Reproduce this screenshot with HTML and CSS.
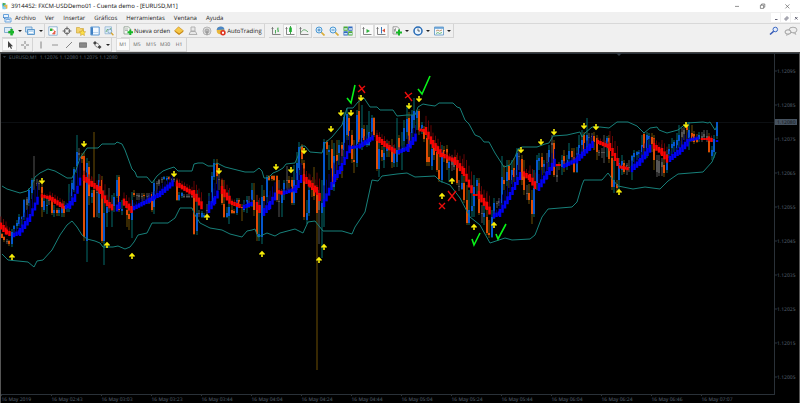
FILE: index.html
```html
<!DOCTYPE html>
<html lang="es">
<head>
<meta charset="UTF-8">
<meta name="viewport" content="width=device-width, initial-scale=1.0">
<title>3914452: FXCM-USDDemo01 - Cuenta demo - [EURUSD,M1]</title>
<link rel="stylesheet" href="styles.css">
</head>

<body>
    <header class="titlebar">
        <svg class="icon" viewBox="0 0 10 10"><path d="M1 2h5l1 6-5 1z" fill="#6fc3e8"/><path d="M2 1l4 1-3 3z" fill="#4cae50"/><path d="M4 4l4-1v5l-4 1z" fill="#e8b64a"/><path d="M3 6h3v3H3z" fill="#8ed2f2"/></svg>
        <h1>3914452: FXCM-USDDemo01 - Cuenta demo - [EURUSD,M1]</h1>
        <div class="window-buttons">
            <button aria-label="Minimizar"><svg class="icon" viewBox="0 0 10 10"><path d="M2.500 5.500h5" stroke="#777" fill="none"/></svg></button>
            <button aria-label="Restaurar"><svg class="icon" viewBox="0 0 10 10"><path d="M3 4h4v4H3zM4.500 4V2.500h4V6.500H7" stroke="#555" stroke-width=".8" fill="none"/></svg></button>
            <button aria-label="Cerrar"><svg class="icon" viewBox="0 0 10 10"><path d="M3 3l5 5M8 3L3 8" stroke="#555" stroke-width=".8"/></svg></button>
        </div>
    </header>

    <nav class="menubar">
        <svg class="icon" viewBox="0 0 10 10"><path d="M1.500 1.500h5v3h-5zM3 5h6v4H3z" fill="#eaf4ff" stroke="#5b9bd8" stroke-width=".9"/><path d="M1 4l2 2M4 7l2-1 2 1" stroke="#3a78c0" stroke-width=".8" fill="none"/></svg>
        <a href="#">Archivo</a>
        <a href="#">Ver</a>
        <a href="#">Insertar</a>
        <a href="#">Gráficos</a>
        <a href="#">Herramientas</a>
        <a href="#">Ventana</a>
        <a href="#">Ayuda</a>
        <div class="child-buttons">
            <button aria-label="Minimizar gráfico"><svg viewBox="0 0 8 8"><path d="M3 5.500h2.500" stroke="#667"/></svg></button>
            <button aria-label="Restaurar gráfico"><svg viewBox="0 0 8 8"><path d="M3 4h2v2H3zM4 3h2v2" fill="none" stroke="#667" stroke-width=".7"/></svg></button>
            <button aria-label="Cerrar gráfico"><svg viewBox="0 0 8 8"><path d="M3 3l2.500 2.500M5.500 3L3 5.500" stroke="#667"/></svg></button>
        </div>
    </nav>

    <div class="toolbar">
        <div class="group">
            <button aria-label="Nuevo gráfico"><svg class="icon" viewBox="0 0 10 10"><path d="M.5 1.500h7v5h-7z" fill="#dcecf8" stroke="#6b9cc4" stroke-width=".8"/><path d="M4.500 5h2V3h2.200v2h1.800v2.200H8.700v2H6.500v-2h-2z" fill="#18b828" stroke="#0c8a1a" stroke-width=".3"/></svg></button>
            <button class="caret" aria-label="Más gráficos"></button>
            <button aria-label="Perfiles"><svg class="icon" viewBox="0 0 10 10"><path d="M.5 1h6.500v5H.5z" fill="#cfe3f5" stroke="#5b95c8" stroke-width=".8"/><path d="M2.500 3.500h7v5h-7z" fill="#bcd9f2" stroke="#4f8ec6" stroke-width=".9"/><path d="M4 6.500h4" stroke="#fff"/></svg></button>
            <button class="caret" aria-label="Más perfiles"></button>
        </div>
        <div class="group bar-end">
            <button aria-label="Observación de mercado"><svg class="icon" viewBox="0 0 10 10"><path d="M.8.8h8.400v8.400H.8z" fill="#fff" stroke="#7aa6cc" stroke-width=".8"/><path d="M2 2.500h2.500V5H2z" fill="#28b030"/><path d="M4.500 3l3 3M7 5v3H4.500z" stroke="#e0523a" stroke-width=".7" fill="#f0705a"/></svg></button>
            <button aria-label="Ventana de datos"><svg class="icon" viewBox="0 0 10 10"><circle cx="5" cy="5" r="2.800" fill="none" stroke="#555" stroke-width=".9"/><path d="M5 .5v3.500M5 6v3.500M.5 5H4M6 5h3.500" stroke="#555" stroke-width=".8"/></svg></button>
            <button aria-label="Navegador"><svg class="icon" viewBox="0 0 10 10"><path d="M.5 1.500h3l1 1h3v4.500h-7z" fill="#f3d36c" stroke="#c99f2c" stroke-width=".6"/><path d="M6.500 3.500l1 2 2.200.3-1.600 1.500.4 2.200-2-1-2 1 .4-2.200-1.600-1.500 2.200-.3z" fill="#fbe04a" stroke="#c9961c" stroke-width=".5"/></svg></button>
            <button aria-label="Terminal"><svg class="icon" viewBox="0 0 10 10"><path d="M.8 1h8.400v8H.8z" fill="#f3f9ff" stroke="#4d8fd0" stroke-width=".9"/><path d="M1 1.300h2v7.500H1z" fill="#3f80c4"/><path d="M3 6.500h6" stroke="#bdd6ee"/></svg></button>
            <button aria-label="Probador de estrategias"><svg class="icon" viewBox="0 0 10 10"><path d="M1 .8h6.500v7H1z" fill="#dcebf7" stroke="#86aed0" stroke-width=".7"/><path d="M2 6l1.500-3L5 5l2-3" stroke="#4aa050" stroke-width=".7" fill="none"/><circle cx="5.800" cy="5.200" r="2" fill="#d8ecfa" stroke="#6d94b4" stroke-width=".7"/><path d="M7.200 6.800L9.400 9.200" stroke="#d9a52c" stroke-width="1.300"/></svg></button>
        </div>
        <div class="group bar-end">
            <button class="with-text"><svg class="icon" viewBox="0 0 10 10"><path d="M1 .8h4.500L7.500 3v5H1z" fill="#f4f7f4" stroke="#7c8f80" stroke-width=".7"/><path d="M2 3h3M2 4.500h3" stroke="#888" stroke-width=".6"/><path d="M4.500 5.200h1.800V3.500h2v1.700H10v2H8.300V9h-2V7.200H4.500z" fill="#16b626"/></svg>Nueva orden</button>
            <button aria-label="MetaEditor"><svg class="icon" viewBox="0 0 10 10"><path d="M.5 5.500L5 9l4.500-3.200L6 3z" fill="#c98a16"/><path d="M.5 4.800L4.500.8l5 4-4.300 3z" fill="#f6c848" stroke="#b8790c" stroke-width=".5"/></svg></button>
            <button aria-label="Comunidad"><svg class="icon" viewBox="0 0 10 10"><path d="M3 1h4v4H3zM1 8.500l1.500-3h5l1.500 3z" fill="#e8e8e8" stroke="#aaa" stroke-width=".9"/></svg></button>
            <button aria-label="Señales"><svg class="icon" viewBox="0 0 10 10"><circle cx="5" cy="5" r="4" fill="#ddd" stroke="#aaa" stroke-width=".8"/><circle cx="5" cy="5" r="2" fill="#bbb" stroke="#999" stroke-width=".7"/><path d="M5 5v4" stroke="#888"/></svg></button>
            <button class="with-text"><svg class="icon" viewBox="0 0 10 10"><circle cx="4.500" cy="4.500" r="3.800" fill="#e9b73a"/><path d="M.7 4C1 1.500 3 .5 5 .6s3 1 3.600 3z" fill="#4a86c8"/><circle cx="7" cy="6.800" r="2.700" fill="#dd3322"/><path d="M6 5.800h2v2H6z" fill="#fff"/></svg>AutoTrading</button>
        </div>
        <div class="group">
            <button aria-label="Barras"><svg class="icon" viewBox="0 0 10 10"><path d="M1.500 1v7.500H9.500M.5 2.500h2" stroke="#777" stroke-width=".9" fill="none"/><path d="M4.500 4v3.500M7 1.500V6M6 3h1M7 5h1" stroke="#3aa548" stroke-width=".9"/></svg></button>
            <button class="pressed" aria-label="Velas"><svg class="icon" viewBox="0 0 10 10"><path d="M1.500 1v7.500H9.500M.5 2.500h2" stroke="#777" stroke-width=".9" fill="none"/><path d="M5.500 0v8" stroke="#138a22" stroke-width=".8"/><path d="M4.200 1.500h2.600v4.500H4.200z" fill="#1fb030"/></svg></button>
            <button aria-label="Línea"><svg class="icon" viewBox="0 0 10 10"><path d="M1.500 1v7.500H9.500M.5 2.500h2" stroke="#777" stroke-width=".9" fill="none"/><path d="M2 6.500C4 3 6 3 9 6" stroke="#58a562" stroke-width=".9" fill="none"/></svg></button>
        </div>
        <div class="group bar-end">
            <button aria-label="Acercar"><svg class="icon" viewBox="0 0 10 10"><path d="M6 6l3.500 3.500" stroke="#d9ac38" stroke-width="1.700"/><circle cx="4" cy="4" r="3" fill="#d9eefb" stroke="#4c98d4" stroke-width="1"/><path d="M2.500 4h3M4 2.500v3" stroke="#2b74b8" stroke-width=".8"/></svg></button>
            <button aria-label="Alejar"><svg class="icon" viewBox="0 0 10 10"><path d="M6 6l3.500 3.500" stroke="#d9ac38" stroke-width="1.700"/><circle cx="4" cy="4" r="3" fill="#d9eefb" stroke="#4c98d4" stroke-width="1"/><path d="M2.500 4h3" stroke="#2b74b8" stroke-width=".8"/></svg></button>
            <button aria-label="Mosaico"><svg class="icon" viewBox="0 0 10 10"><path d="M.5.5h4.300v4.200H.5zM5.200 5.200h4.300v4.300H5.200z" fill="#48a838"/><path d="M5.200.5h4.300v4.200H5.200zM.5 5.200h4.300v4.300H.5z" fill="#2f69c0"/><path d="M1.200 2.300h3v1.500h-3zM6 2.300h3v1.500H6zM1.200 7h3v1.500h-3zM6 7h3v1.500H6z" fill="#d6eaf2"/></svg></button>
        </div>
        <div class="group">
            <button class="pressed" aria-label="Autodesplazamiento"><svg class="icon" viewBox="0 0 10 10"><path d="M1.500 1v7.500H9.500M.5 2.500h2" stroke="#777" stroke-width=".9" fill="none"/><path d="M4.500 3l3.500 2-3.500 2z" fill="#2ab03a"/></svg></button>
            <button class="pressed" aria-label="Desplazar gráfico"><svg class="icon" viewBox="0 0 10 10"><path d="M1.500 1v7.500H9.500M.5 2.500h2" stroke="#777" stroke-width=".9" fill="none"/><path d="M5.500 1v6.500" stroke="#3b78b8"/><path d="M9 2.500v4L6.200 4.500z" fill="#d8503a"/></svg></button>
        </div>
        <div class="group">
            <button aria-label="Indicadores"><svg class="icon" viewBox="0 0 10 10"><path d="M1 .8h4.500L7.500 3v5H1z" fill="#f6f6f6" stroke="#888" stroke-width=".8"/><path d="M4 2.500c-1.500 0-1 2-1.200 4M2 4h2" stroke="#555" stroke-width=".6" fill="none"/><path d="M4 5.500h2v-2h2v2h2v2H8v2H6v-2H4z" fill="#16b626"/></svg></button>
            <button class="caret" aria-label="Más indicadores"></button>
            <button aria-label="Períodos"><svg class="icon" viewBox="0 0 10 10"><circle cx="5" cy="5" r="4" fill="#eaf5ff" stroke="#2569b4" stroke-width="1.500"/><path d="M5 2.500V5h2" stroke="#444" stroke-width=".8" fill="none"/></svg></button>
            <button class="caret" aria-label="Más períodos"></button>
            <button aria-label="Plantillas"><svg class="icon" viewBox="0 0 10 10"><path d="M.5 1h9v8h-9z" fill="#f4f9fd" stroke="#5b93c4" stroke-width=".8"/><path d="M.5 1h9v1.800h-9z" fill="#69a2d6"/><path d="M2 5l2-1 1.500 1L8 4" stroke="#b07a4a" stroke-width=".8" fill="none"/><path d="M2 7.500l2-1 1.500 1L8 6.500" stroke="#4ba75a" stroke-width=".8" fill="none"/></svg></button>
            <button class="caret" aria-label="Más plantillas"></button>
        </div>
        <div class="tools-right">
            <button aria-label="Buscar"><svg class="icon" viewBox="0 0 10 10"><path d="M5 5L1 8.500" stroke="#3558b4" stroke-width="1.600"/><circle cx="6.300" cy="3.500" r="2.300" fill="#e4ecfa" stroke="#3f6bc4" stroke-width="1"/></svg></button>
            <button aria-label="Chat"><svg class="chat" viewBox="0 0 14 10"><ellipse cx="9" cy="4" rx="4" ry="2.800" fill="#eee" stroke="#999" stroke-width=".8"/><ellipse cx="4" cy="6" rx="3" ry="2.200" fill="#eee" stroke="#888" stroke-width=".8"/><path d="M3 8l-.5 1.500L5 8M11 6.500l1 2-3-1.700" fill="#ccc" stroke="#999" stroke-width=".5"/></svg></button>
        </div>
    </div>

    <div class="toolbar">
        <div class="group pointers">
            <button class="pressed" aria-label="Cursor"><svg class="icon" viewBox="0 0 10 10"><path d="M3 1v7l1.700-1.500L6 9l1-.5L6 6.200h2z" fill="#444"/></svg></button>
            <button aria-label="Cruz"><svg class="icon" viewBox="0 0 10 10"><path d="M5 1v3M5 6v3M1 5h3M6 5h3" stroke="#777" stroke-width=".9"/></svg></button>
        </div>
        <div class="group bar-end">
            <button aria-label="Línea vertical"><svg class="icon" viewBox="0 0 10 10"><path d="M5 1.500v7" stroke="#777" stroke-width=".9"/></svg></button>
            <button aria-label="Línea horizontal"><svg class="icon" viewBox="0 0 10 10"><path d="M2 5h6" stroke="#888" stroke-width=".9"/></svg></button>
            <button aria-label="Línea de tendencia"><svg class="icon" viewBox="0 0 10 10"><path d="M2 8l6-6" stroke="#777" stroke-width=".9"/></svg></button>
            <button aria-label="Rectángulo"><svg class="icon" viewBox="0 0 10 10"><path d="M1.500 2.800h7v4.500h-7z" fill="#888" stroke="#666" stroke-width=".7"/></svg></button>
            <button aria-label="Flechas"><svg class="icon" viewBox="0 0 10 10"><path d="M1 3l2-2 2 2-2 2zM5.500 7l2-2 2 2-2 2z" fill="#444"/><path d="M2.500 5l3 2.500M5 3l2 1.500" stroke="#666" stroke-width=".8"/></svg></button>
            <button class="caret" aria-label="Más flechas"></button>
        </div>
        <div class="group timeframes">
            <button class="pressed">M1</button>
            <button>M5</button>
            <button>M15</button>
            <button>M30</button>
            <button>H1</button>
        </div>
    </div>

    <main>
        <svg id="chart" viewBox="0 53 800 350" role="img" aria-label="EURUSD,M1">
            <path class="frame" d="M774.500 53v341M1 394.500h774M1 53.500h798"/>
            <path class="edge" d="M.5 53v350M799.500 53v350"/>
            <path class="price-line" d="M1 122.500h773"/>
            <path class="shift-mark" d="M616 53h6l-3 3z"/>
            <g id="candles"></g>
            <g id="ribbon"></g>
            <polyline class="band" points="2,186 7,189 20,193 27,191 31,187 35,177 40,173 48,169 55,171 62,175 67,178 72,178 76,170 80,158 87,148 98,148 102,144 115,144 117,142 122,144 125,150 132,169 135,172 137,177 147,177 152,183 157,176 163,171 168,169 174,167 178,171 192,171 194,164 198,163 203,163 208,166 213,166 217,163 225,167 245,172 254,172 259,168 262,171 264,178 268,178 273,173 278,171 283,168 286,164 295,163 298,156 301,146 305,146 310,152 322,153 325,143 332,137 342,125 347,108 353,108 358,102 364,98 370,107 377,107 380,110 393,110 397,116 407,115 415,115 418,107 423,104 428,105 435,106 439,103 453,103 457,107 460,108 465,120 469,124 475,135 480,137 484,142 489,142 495,153 504,167 510,165 515,157 518,149 522,147 537,147 545,144 549,143 553,136 567,135 580,132 582,137 585,133 592,127 600,127 609,128 617,122 628,122 637,126 644,133 650,128 657,127 659,130 667,133 678,130 687,123 703,122 708,123 710,122 715,130 717,126"/>
            <polyline class="band" points="2,254 8,260 28,262 34,267 37,261 43,260 52,250 60,235 67,225 72,221 77,227 82,235 87,239 95,241 100,243 103,247 113,247 118,246 125,249 130,247 134,242 138,235 147,233 152,223 168,223 175,218 180,208 192,208 195,215 200,223 210,228 222,230 230,234 242,237 247,231 252,230 255,229 258,237 267,233 275,236 280,233 295,229 303,233 308,222 315,221 323,231 342,231 352,234 355,227 365,212 372,180 378,181 382,176 397,174 407,173 415,177 435,176 440,181 450,185 460,198 470,217 480,225 490,243 505,238 512,240 530,239 535,235 542,217 548,209 572,207 577,202 582,185 584,180 602,180 608,173 613,180 618,186 633,189 645,187 660,189 668,181 678,174 703,172 712,162 716,152"/>
            <g id="arrows"></g>
            <path class="confirmed" d="M347 98l4 5 4-18M418 89l4 5 8-18M472 239l2 6 6-12M496 234l2 5 8-15"/>
            <path class="rejected" d="M359 85l6 8M365 86l-7 6M405 92l7 9M412 93l-7 5M439 203l6 6M445 203l-6 6M448 191l8 10M456 191l-8 10"/>
            <path class="shift-mark" d="M3 56h3l-1.500 2z"/>
            <text class="quote" x="9" y="59">EURUSD,M1&#160; 1.12076 1.12080 1.12075 1.12080</text>
            <g id="priceScale" class="scale"></g>
            <g id="timeScale" class="scale"></g>
            <rect class="price-tag" x="775" y="119" width="22" height="6"/>
            <text class="price-now" x="777" y="124">1.12080</text>
        </svg>
    </main>
    <script src="chart.js"></script>
</body>
</html>
```
FILE: styles.css
```css
* {
    box-sizing: border-box;
}
body {
    margin: 0;
    font-family: "Open Sans", sans-serif;
    font-size: 6px;
    line-height: 10px;
    text-rendering: geometricPrecision;
    color: #222;
    background-color: #f0f0f0;
}
button {
    display: flex;
    align-items: center;
    justify-content: center;
    margin: 0;
    padding: 0;
    border: 0;
    background: none;
    font: inherit;
    color: inherit;
    text-rendering: inherit;
}
.icon {
    display: block;
    width: 10px;
    height: 10px;
    flex: none;
}

/* title bar and menu */
.titlebar {
    display: flex;
    align-items: center;
    height: 12px;
    padding-left: 1px;
    background-color: #fff;
}
.titlebar h1 {
    margin: 0;
    font-family: "Noto Sans", sans-serif;
    font-size: 6px;
    font-weight: normal;
}
.titlebar .icon {
    width: 8px;
    height: 8px;
    margin-right: 2px;
}
.window-buttons {
    display: flex;
    margin-left: auto;
}
.window-buttons button {
    width: 25px;
}
.menubar {
    display: flex;
    align-items: center;
    gap: 9px;
    height: 12px;
    padding-left: 2px;
    border-bottom: 1px solid #d8d8d8;
}
.menubar .icon {
    margin-right: -6px;
}
.menubar a {
    color: #222;
    text-decoration: none;
}
.child-buttons {
    display: flex;
    gap: 1px;
    margin-left: auto;
}
.child-buttons button {
    width: 9px;
    height: 9px;
    background-color: #fff;
}
.child-buttons svg {
    width: 8px;
    height: 8px;
}

/* toolbars */
.toolbar {
    display: flex;
    height: 14px;
    padding-left: 2px;
}
.group {
    display: flex;
    margin-right: 1px;
    border-right: 1px solid #d4d4d4;
    border-bottom: 1px solid #d4d4d4;
}
.group button {
    width: 14px;
}
.group .caret {
    width: 7px;
}
.caret::before {
    content: "";
    border: 2px solid transparent;
    border-top-color: #222;
    border-bottom: 0;
}
.group .with-text {
    width: auto;
    gap: 1px;
    padding: 0 2px;
}
.bar-end {
    margin-right: 4px;
}
.pressed {
    background-color: #fafafa;
    box-shadow: inset 0 0 0 1px #dcdcdc;
}
.tools-right {
    display: flex;
    gap: 5px;
    margin-left: auto;
    padding-right: 2px;
}
.chat {
    width: 14px;
    height: 10px;
}
.pointers button {
    width: 15px;
}
.timeframes {
    font-size: 5px;
    color: #555;
}

/* chart */
main {
    border-top: 1px solid #444;
    background-color: #000;
}
#chart {
    display: block;
    width: 100%;
}
#chart text {
    font-family: "Noto Sans", sans-serif;
    font-size: 5px;
}
.frame {
    fill: none;
    stroke: #2a3138;
}
.edge {
    stroke: #555;
}
.price-line {
    stroke: #0c0f12;
}
.shift-mark {
    fill: #2f3942;
}
#chart .quote {
    fill: #56626e;
}
.band {
    fill: none;
    stroke: #17807a;
    stroke-width: 1;
}
.scale text {
    fill: #566270;
}
.scale path {
    stroke: #2a3138;
}
.price-tag {
    fill: #46525f;
}
.price-now {
    fill: #10151a;
}

/* candles */
.up .wick { fill: #046c6c; }
.up .body { fill: #0456cc; }
.down .wick { fill: #6e5004; }
.down .body { fill: #de4c04; }
.flat .wick,
.flat .body { fill: #555; }

.rise { fill: #0000f4; }
.fall { fill: #f80404; }
.rise-tail { fill: #000070; }
.fall-tail { fill: #640404; }

#arrows path {
    fill: none;
    stroke: #f8ee08;
    stroke-width: 1.6;
}
.confirmed {
    fill: none;
    stroke: #08f018;
    stroke-width: 1.6;
}
.rejected {
    fill: none;
    stroke: #e80c0c;
    stroke-width: 1.4;
}
```
FILE: chart.js
```js
const NS = 'http://www.w3.org/2000/svg';

function add(parent, name, attrs, text) {
  const node = document.createElementNS(NS, name);
  for (const key in attrs) node.setAttribute(key, attrs[key]);
  if (text) node.textContent = text;
  parent.appendChild(node);
  return node;
}

// x high top bottom low kind (u = up, d = down, f = flat)
const candles = `
2 233 234 238 238 d;4 236 237 240 242 d;7 239 241 242 244 f;9 240 241 244 246 d;12 229 232 244 247 u;14 225 226 229 234 u
17 220 223 226 229 u;19 214 217 224 226 u;22 216 217 219 226 u;24 199 200 217 220 u;27 197 199 205 210 f;29 188 190 203 206 u
32 178 180 193 199 u;34 156 180 181 190 f;37 179 183 184 186 f;39 181 183 184 190 f;42 180 187 207 217 d;44 198 201 210 212 u
47 198 205 206 214 u;49 198 200 201 205 f;52 198 200 213 215 d;54 205 210 213 217 u;57 208 210 213 216 d;59 208 210 213 216 u
62 203 204 213 217 u;64 201 206 213 217 d;67 203 206 208 212 u;69 184 207 208 212 u;72 180 183 196 205 u;74 167 169 190 192 u
77 135 152 166 173 u;79 148 153 155 160 f;82 153 156 159 163 d;84 152 156 237 241 d;87 158 163 241 262 u;89 161 167 196 205 d
92 190 193 197 203 u;94 132 190 217 218 d;97 186 192 193 217 f;99 174 180 213 218 u;102 176 180 241 243 d;104 190 213 241 265 u
107 200 207 213 227 u;109 188 205 206 212 f;112 195 208 209 227 u;114 193 197 206 212 u;117 175 180 196 198 u;119 175 177 210 212 d
122 200 209 211 215 u;124 200 201 203 206 u;127 205 210 215 227 d;129 207 214 219 230 d;132 192 200 220 238 u;134 190 193 195 197 d
137 193 195 196 200 f;139 193 195 197 200 f;142 193 196 197 203 f;144 193 195 196 200 d;147 193 196 197 200 f;149 193 195 197 204 f
152 192 194 210 212 d;154 180 183 207 214 u;157 181 183 184 195 f;159 179 180 184 186 f;162 177 179 180 183 f;164 176 177 179 180 u
167 176 178 180 181 u;169 176 177 179 180 d;172 178 179 180 182 f;174 178 179 180 182 f;177 179 180 200 201 d;179 192 195 200 201 u
182 192 193 196 198 u;184 194 196 197 198 f;187 194 196 197 198 f;189 194 196 197 198 f;192 193 196 197 198 f;194 193 196 234 235 d
197 190 213 231 235 u;199 210 213 214 217 f;202 211 213 217 218 u;204 213 215 217 218 u;207 204 210 211 215 f;209 193 201 210 211 u
212 172 176 203 204 u;214 159 163 177 180 u;217 159 163 176 184 d;219 170 179 180 190 f;222 179 180 203 205 d;224 180 204 217 218 d
227 207 213 217 218 u;229 190 207 216 224 u;232 200 210 213 214 d;234 209 211 213 214 d;237 198 200 213 215 u;239 198 200 206 208 d
242 204 207 208 221 d;244 200 205 210 212 u;247 196 200 207 213 u;249 196 201 205 208 f;252 183 190 200 207 u;254 183 200 210 216 d
257 195 205 234 241 d;259 200 234 237 241 u;262 185 197 237 244 u;264 190 196 201 210 d;267 175 177 197 203 u;269 175 176 180 181 d
272 175 176 179 181 d;274 175 176 180 181 d;277 175 176 200 202 d;279 180 201 202 217 f;282 190 193 203 217 u;284 180 183 193 200 u
287 166 180 181 190 f;289 176 180 183 190 d;292 177 180 203 205 d;294 165 180 203 205 u;297 152 163 180 190 u;299 142 147 170 175 u
302 144 146 159 165 d;304 160 163 217 220 d;307 200 213 220 224 u;309 180 190 213 216 u;312 180 187 190 197 d;314 167 188 196 200 d
317 185 188 213 370 d;319 190 193 210 244 f;322 180 203 213 258 u;324 139 142 203 227 u;327 140 142 149 155 d;329 145 150 152 170 u
332 140 149 187 190 d;334 143 156 187 191 u;337 140 155 161 180 d;339 140 145 153 165 u;342 142 145 156 178 d;344 112 117 150 158 u
347 108 114 135 140 u;349 112 118 136 140 d;352 130 135 159 163 d;354 140 160 162 173 d;357 110 115 163 167 u;359 95 111 142 145 d
362 105 128 145 150 u;364 125 129 140 146 d;367 125 142 145 147 u;369 111 132 145 146 u;372 115 118 132 139 u;374 117 118 135 137 d
377 133 135 169 171 d;379 140 149 169 177 u;382 146 150 157 161 d;384 145 153 160 168 u;387 140 148 151 157 u;389 141 147 150 157 d
392 139 149 162 168 d;394 145 153 163 167 u;397 118 150 162 167 u;399 135 138 152 155 d;402 132 148 152 170 u;404 120 128 141 150 u
407 105 119 132 139 u;409 112 118 147 152 d;412 110 115 133 145 u;414 98 111 120 128 u;417 110 111 118 130 u;419 109 111 130 135 d
422 122 125 130 134 u;424 126 129 139 142 d;427 135 138 162 166 d;429 140 157 162 166 d;432 140 149 166 170 u;434 140 148 155 160 d
437 145 152 170 172 d;439 150 170 179 182 d;442 145 152 180 183 u;444 146 150 156 162 d;447 145 149 163 170 d;449 158 162 168 182 u
452 155 160 165 171 f;454 158 161 167 170 f;457 155 165 183 185 d;459 180 186 187 191 f;462 175 183 189 190 u;464 170 183 200 203 d
467 185 200 223 225 d;469 190 210 223 225 u;472 185 206 211 217 u;474 175 187 206 217 u;477 178 180 186 195 u;479 178 183 213 215 d
482 205 213 214 223 f;484 205 213 217 225 u;487 210 217 233 235 d;489 220 233 235 238 d;492 210 217 237 238 u;494 198 203 217 219 u
497 201 203 204 208 f;499 198 201 203 206 f;502 156 177 203 205 u;504 165 180 184 190 d;507 160 172 181 186 u;509 160 166 180 188 d
512 160 170 180 184 u;514 158 168 177 182 d;517 148 153 175 180 u;519 150 156 157 170 f;522 155 159 180 185 d;524 160 175 190 195 d
527 185 193 194 200 f;529 184 193 200 204 d;532 190 200 214 224 d;534 170 188 214 217 u;537 155 160 183 190 u;539 153 158 161 170 u
542 153 157 167 175 d;544 160 164 167 173 u;547 153 162 163 170 f;549 145 150 162 173 u;552 135 143 145 165 f;554 140 143 175 177 d
557 165 175 177 182 f;559 162 164 166 170 d;562 155 160 167 175 u;564 150 156 168 172 d;567 155 160 166 170 u;569 143 151 159 165 u
572 148 151 157 162 d;574 148 157 172 173 d;577 147 153 172 173 u;579 135 145 155 160 u;582 130 140 145 152 u;584 132 135 152 155 d
587 118 135 150 152 u;589 133 137 138 146 f;592 133 136 137 143 f;594 132 136 142 150 d;597 135 138 152 160 d;599 150 152 153 156 f
602 148 152 153 158 f;604 135 152 153 163 f;607 136 138 147 157 u;609 135 138 159 163 d;612 155 158 187 190 d;614 160 180 187 193 u
617 180 184 188 191 d;619 158 163 180 190 u;622 155 161 170 175 u;624 160 163 172 174 d;627 163 165 167 175 f;629 160 167 168 172 f
632 155 156 168 180 u;634 150 153 157 162 u;637 151 152 155 160 u;639 150 152 154 158 u;642 135 145 152 160 u;644 132 134 148 155 d
647 132 135 148 158 u;649 133 136 139 148 u;652 133 137 144 152 d;654 135 138 160 170 d;657 155 160 172 177 f;659 155 161 173 176 f
662 158 162 167 176 f;664 155 165 173 177 d;667 150 154 170 173 u;669 144 149 154 158 u;672 138 144 148 155 u;674 140 142 146 152 u
677 133 140 148 152 u;679 125 135 141 148 u;682 128 132 137 148 f;684 127 130 134 140 f;687 124 126 130 142 d;689 122 130 138 150 u
692 125 133 140 142 d;694 131 134 142 144 d;697 134 138 142 143 d;699 132 135 139 142 u;702 132 136 138 142 f;704 130 134 137 140 f
707 130 136 138 142 f;709 133 136 152 153 d;712 146 150 156 160 u;714 135 139 152 158 u;717 122 122 136 139 u`;

// smoothed trend: direction, then x,y corners
const trend = [
  ['fall', [1, 226], [7, 232], [12, 235]],
  ['rise', [14, 235], [20, 232], [30, 218], [40, 195]],
  ['fall', [42, 196], [50, 198], [64, 207]],
  ['rise', [66, 207], [70, 205], [75, 198], [82, 175]],
  ['fall', [84, 178], [92, 184], [100, 190], [107, 203], [114, 209]],
  ['rise', [117, 208], [122, 203]],
  ['fall', [124, 202], [132, 210]],
  ['rise', [134, 208], [150, 200], [160, 194], [174, 182]],
  ['fall', [177, 184], [194, 194], [204, 209]],
  ['rise', [209, 209], [215, 200], [220, 189]],
  ['fall', [222, 190], [232, 203], [242, 207]],
  ['rise', [244, 207], [254, 203]],
  ['fall', [257, 206], [262, 212]],
  ['rise', [264, 212], [270, 205], [277, 193]],
  ['fall', [279, 192], [282, 193]],
  ['rise', [284, 193], [296, 189], [302, 177]],
  ['fall', [304, 178], [310, 184], [317, 191], [322, 203]],
  ['rise', [324, 203], [335, 178], [342, 167], [350, 148], [360, 146], [374, 137]],
  ['fall', [377, 138], [387, 146], [396, 152]],
  ['rise', [399, 152], [408, 148], [418, 134]],
  ['fall', [420, 130], [426, 131], [433, 144], [442, 155], [455, 161], [464, 172], [474, 195], [479, 195], [487, 206], [492, 215]],
  ['rise', [494, 216], [500, 213], [510, 196], [521, 174]],
  ['fall', [524, 174], [530, 178], [537, 188]],
  ['rise', [539, 187], [547, 175], [555, 162]],
  ['fall', [557, 165], [562, 165]],
  ['rise', [564, 166], [577, 160], [590, 147], [595, 142]],
  ['fall', [598, 142], [610, 147], [620, 167], [629, 169]],
  ['rise', [632, 169], [640, 162], [652, 146]],
  ['fall', [654, 146], [662, 152], [668, 160]],
  ['rise', [670, 159], [680, 151], [690, 140], [699, 138]],
  ['fall', [702, 139], [709, 139], [714, 141]],
  ['rise', [717, 141], [718, 141]],
];

const down = [[42, 181], [84, 144], [174, 174], [219, 171], [276, 167], [291, 170], [304, 151], [331, 129],
  [341, 113], [351, 113], [361, 98], [409, 106], [419, 99], [521, 150], [541, 142], [554, 132], [584, 126], [596, 127], [686, 125]];
const up = [[12, 257], [107, 245], [132, 256], [207, 217], [262, 254], [319, 260], [324, 247],
  [442, 196], [452, 181], [474, 227], [494, 225], [619, 192]];

const kinds = { u: 'up', d: 'down', f: 'flat' };
const candleLayer = document.getElementById('candles');
candles.trim().split(/[;\n]/).forEach(row => {
  const [x, high, top, bottom, low, kind] = row.trim().split(' ');
  const g = add(candleLayer, 'g', { class: kinds[kind] });
  add(g, 'rect', { class: 'wick', x: x - 0.5, y: high, width: 1, height: low - high });
  add(g, 'rect', { class: 'body', x: x - 1, y: top, width: 2, height: bottom - top });
});

const ribbon = document.getElementById('ribbon');
trend.forEach(([dir, ...points]) => {
  for (let i = 0; i < points.length - 1; i++) {
    const [x1, y1] = points[i];
    const [x2, y2] = points[i + 1];
    const slope = (y2 - y1) / (x2 - x1);
    const height = 2 + Math.min(6, Math.abs(slope) * 5);
    for (let x = x1; x < x2; x += 2.5) {
      const y = y1 + slope * (x - x1);
      const tail = Math.abs(slope) * 6;
      add(ribbon, 'rect', { class: dir + '-tail', x: x - 0.5, y: y - height / 2 - tail, width: 1, height: tail });
      add(ribbon, 'rect', { class: dir, x: x - 1.25, y: y - height / 2, width: 2.5, height });
    }
  }
});

const arrows = document.getElementById('arrows');
down.forEach(([x, y]) => add(arrows, 'path', { d: `M${x} ${y - 3}v5M${x - 2.5} ${y - 0.5}l2.5 2.5 2.5-2.5` }));
up.forEach(([x, y]) => add(arrows, 'path', { d: `M${x} ${y + 3}v-5M${x - 2.5} ${y + 0.5}l2.5-2.5 2.5 2.5` }));

const priceScale = document.getElementById('priceScale');
for (let i = 0; i < 10; i++) {
  const y = 71 + i * 34;
  add(priceScale, 'path', { d: `M775 ${y}h2` });
  add(priceScale, 'text', { x: 777, y: y + 2 }, (1.12095 - i * 0.0001).toFixed(5));
}

const timeScale = document.getElementById('timeScale');
['2019', '02:43', '03:03', '03:23', '03:44', '04:04', '04:24', '04:44', '05:04', '05:24', '05:44', '06:04', '06:24', '06:46', '07:07']
  .forEach((time, i) => {
    const x = 1 + i * 50;
    add(timeScale, 'path', { d: `M${x + 0.5} 394v2` });
    add(timeScale, 'text', { x: x + 0.5, y: 401 }, '16 May ' + time);
  });
```
